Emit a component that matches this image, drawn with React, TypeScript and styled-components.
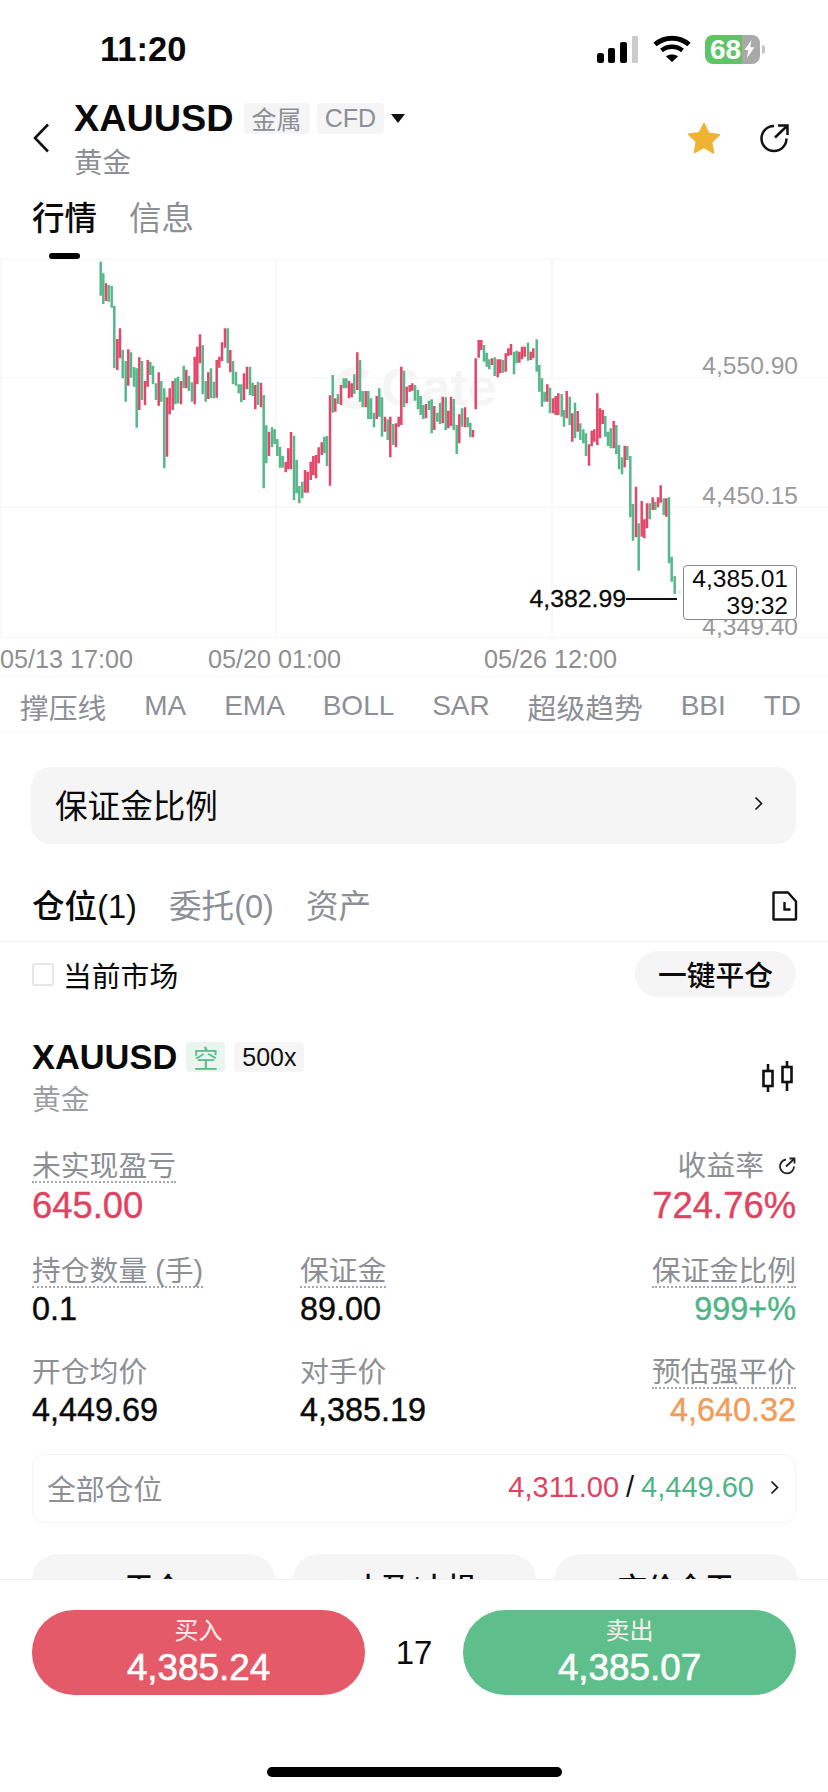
import React from 'react';
import styled, { createGlobalStyle } from 'styled-components';

const RED = '#e0435f';
const GREEN = '#4fb587';
const GRAY = '#8c9095';

const GlobalStyle = createGlobalStyle`
  html, body {
    margin: 0;
    padding: 0;
    background: #fff;
    font-family: "Liberation Sans", "Noto Sans CJK SC", sans-serif;
    color: #0a0a0a;
  }
  * { box-sizing: border-box; }
`;

const Page = styled.div`
  width: 828px;
  height: 1792px;
  display: flex;
  flex-direction: column;
  overflow: hidden;
  background: #fff;
`;

const Content = styled.div`
  flex: 1;
  min-height: 0;
  overflow: hidden;
`;

/* status bar */
const StatusBar = styled.div`
  height: 98px;
  padding: 0 63px 0 100px;
  display: flex;
  align-items: center;
  justify-content: space-between;
`;

const Clock = styled.div`
  font-size: 34.5px;
  font-weight: 700;
`;

const StatusIcons = styled.div`
  display: flex;
  align-items: center;
  gap: 14px;
`;

const Battery = styled.div`
  position: relative;
  width: 55px;
  height: 29px;
  border-radius: 8px;
  background: linear-gradient(90deg, #5fc465 0 68%, #a9a9a9 68% 100%);
  color: #fff;
  font-size: 28px;
  font-weight: 700;
  line-height: 29px;
  padding-left: 5px;
  display: flex;
  align-items: center;
  margin-right: 5px;
  svg {
    margin-left: 3px;
    flex: none;
  }
  &::after {
    content: '';
    position: absolute;
    right: -5px;
    top: 10px;
    width: 3px;
    height: 9px;
    border-radius: 0 3px 3px 0;
    background: #c4c4c4;
  }
`;

/* symbol header */
const Header = styled.div`
  height: 92px;
  padding: 0 38px 0 32px;
  display: flex;
  align-items: flex-start;
`;

const BackBox = styled.div`
  width: 42px;
  margin-top: 25px;
  display: flex;
`;

const TitleBlock = styled.div`
  flex: 1;
`;

const TitleRow = styled.div`
  height: 40px;
  display: flex;
  align-items: center;
`;

const Symbol = styled.div<{ $size: number }>`
  font-size: ${(p) => p.$size}px;
  font-weight: 700;
`;

const Tag = styled.span<{ $tone?: 'green' | 'dark' }>`
  height: ${(p) => (p.$tone ? 30 : 31)}px;
  padding: 0 ${(p) => (p.$tone === 'green' ? 7 : 8)}px;
  margin-left: 7px;
  border-radius: 4px;
  display: inline-flex;
  align-items: center;
  font-size: 25px;
  background: ${(p) => (p.$tone === 'green' ? '#e8f6ef' : '#f5f5f5')};
  color: ${(p) => (p.$tone === 'green' ? '#5bbd8b' : p.$tone === 'dark' ? '#111' : '#8c9095')};
`;

const Caret = styled.span`
  margin-left: 7px;
  width: 0;
  height: 0;
  border-left: 7px solid transparent;
  border-right: 7px solid transparent;
  border-top: 9px solid #111;
`;

const SubName = styled.div`
  height: 48px;
  margin-top: 1px;
  line-height: 48px;
  font-size: 28.5px;
  color: ${GRAY};
`;

const HeaderActions = styled.div`
  margin-top: 24px;
  display: flex;
  align-items: center;
  gap: 39px;
`;

/* tabs */
const ChartTabs = styled.div`
  height: 69px;
  padding-left: 32px;
  display: flex;
  gap: 32px;
`;

const ChartTab = styled.div<{ $active?: boolean }>`
  font-size: 32.5px;
  line-height: 58px;
  font-weight: ${(p) => (p.$active ? 500 : 400)};
  color: ${(p) => (p.$active ? '#0a0a0a' : GRAY)};
  &::after {
    content: '';
    display: block;
    width: 31px;
    height: 6px;
    margin: 5px auto 0;
    border-radius: 3px;
    background: ${(p) => (p.$active ? '#000' : 'transparent')};
  }
`;

/* chart */
const ChartWrap = styled.div`
  position: relative;
  height: 379px;
  svg {
    display: block;
  }
`;

const YLabel = styled.div<{ $top: number }>`
  position: absolute;
  right: 30px;
  top: ${(p) => p.$top}px;
  font-size: 24.6px;
  line-height: 28px;
  color: #999;
`;

const LastPrice = styled.div`
  position: absolute;
  top: 326px;
  right: 151px;
  display: flex;
  align-items: center;
  font-size: 24.8px;
  line-height: 28px;
  color: #0a0a0a;
  -webkit-text-stroke: 0.3px currentColor;
  &::after {
    content: '';
    width: 51px;
    height: 2px;
    background: #111;
  }
`;

const PriceBox = styled.div`
  position: absolute;
  top: 306px;
  right: 31px;
  width: 114px;
  height: 55px;
  padding: 0 8px 0 0;
  border: 1px solid #8a8a8a;
  border-radius: 4px;
  background: #fff;
  font-size: 24.6px;
  line-height: 26.5px;
  text-align: right;
  color: #0a0a0a;
`;

const TimeAxis = styled.div`
  height: 39px;
  padding-top: 7px;
  display: grid;
  grid-template-columns: 208px 276px 1fr;
  font-size: 25.2px;
  line-height: 28px;
  color: #8f8f8f;
  border-bottom: 1px solid #f7f7f7;
`;

const IndicatorRow = styled.div`
  height: 56px;
  padding: 3px 27px 0 20px;
  display: flex;
  align-items: center;
  justify-content: space-between;
  color: ${GRAY};
  border-bottom: 1px solid #f7f7f7;
`;

const Indicator = styled.span<{ $cjk?: boolean }>`
  font-size: ${(p) => (p.$cjk ? 28.8 : 28)}px;
`;

const MarginCard = styled.div`
  height: 77px;
  margin: 34px 32px 0 31px;
  padding: 0 33px 5px 24px;
  border-radius: 20px;
  background: #f5f5f5;
  display: flex;
  align-items: center;
  justify-content: space-between;
  font-size: 32.6px;
`;

/* positions */
const PositionTabs = styled.div`
  height: 98px;
  padding: 40px 30px 18px 32px;
  display: flex;
  align-items: center;
  gap: 32px;
  border-bottom: 1px solid #f3f3f3;
`;

const PositionTab = styled.div<{ $active?: boolean }>`
  font-size: 32.6px;
  font-weight: ${(p) => (p.$active ? 500 : 400)};
  color: ${(p) => (p.$active ? '#0a0a0a' : GRAY)};
  white-space: nowrap;
`;

const PushRight = styled.div`
  margin-left: auto;
  display: flex;
  padding-top: 4px;
`;

const FilterRow = styled.div`
  height: 55px;
  padding: 9px 32px 0;
  display: flex;
  align-items: center;
  justify-content: space-between;
`;

const MarketCheck = styled.label`
  display: flex;
  align-items: center;
  gap: 9px;
  font-size: 28.8px;
`;

const CheckBox = styled.span`
  width: 22px;
  height: 23px;
  border: 2px solid #e6e6e6;
  border-radius: 3px;
`;

const PillButton = styled.div`
  width: 161px;
  height: 46px;
  padding-bottom: 2px;
  border-radius: 23px;
  background: #f5f5f5;
  display: flex;
  align-items: center;
  justify-content: center;
  font-size: 28.8px;
  font-weight: 500;
`;

const PositionHead = styled.div`
  margin-top: 45px;
  padding: 0 35px 0 32px;
  display: flex;
  justify-content: space-between;
`;

const PositionTitle = styled.div`
  height: 30px;
  display: flex;
  align-items: center;
  gap: 2px;
`;

const PositionName = styled.div`
  height: 40px;
  margin-top: 8px;
  line-height: 40px;
  font-size: 28.8px;
  color: #9a9ea3;
`;

const IconSlot = styled.div`
  margin-top: 19px;
  display: flex;
`;

const StatGrid = styled.div`
  margin-top: 31px;
  padding: 0 32px;
  display: grid;
  grid-template-columns: 268px 1fr auto;
  row-gap: 27px;
`;

const Stat = styled.div<{ $right?: boolean }>`
  display: flex;
  flex-direction: column;
  align-items: ${(p) => (p.$right ? 'flex-end' : 'flex-start')};
`;

const StatLabel = styled.div<{ $dotted?: boolean }>`
  height: 32px;
  display: flex;
  align-items: center;
  font-size: 28.8px;
  line-height: 32px;
  color: ${GRAY};
  border-bottom: 2px dotted ${(p) => (p.$dotted ? '#a8a8a8' : 'transparent')};
  white-space: nowrap;
  svg {
    margin-left: 14px;
  }
`;

const StatValue = styled.div<{ $big?: boolean; $color?: string }>`
  font-size: ${(p) => (p.$big ? 36.4 : 32.4)}px;
  line-height: ${(p) => (p.$big ? 46 : 42)}px;
  color: ${(p) => p.$color || '#0a0a0a'};
  -webkit-text-stroke: 0.4px currentColor;
`;

const AllPositions = styled.div`
  height: 69px;
  margin: 23px 32px 0;
  padding: 0 16px 3px 14px;
  border: 1px solid #f4f4f4;
  border-radius: 12px;
  display: flex;
  align-items: center;
  justify-content: space-between;
  font-size: 28.8px;
  color: ${GRAY};
`;

const RangeValues = styled.div`
  display: flex;
  align-items: center;
  gap: 7px;
  font-size: 29px;
  color: #111;
  svg {
    margin-left: 9px;
  }
`;

const Tone = styled.span<{ $color: string }>`
  color: ${(p) => p.$color};
`;

const ActionRow = styled.div`
  margin: 31px 32px 0;
  display: grid;
  grid-template-columns: 243px 243px 244px;
  gap: 18px;
`;

const ActionButton = styled.div`
  height: 64px;
  padding-top: 11px;
  border-radius: 26px;
  background: #f5f5f5;
  text-align: center;
  font-size: 29px;
  font-weight: 500;
`;

/* trade footer */
const Footer = styled.div`
  height: 213px;
  padding: 30px 32px 0;
  background: #fff;
  border-top: 1px solid #f2f2f2;
`;

const TradeRow = styled.div`
  display: flex;
  align-items: center;
  justify-content: space-between;
`;

const TradeButton = styled.div<{ $bg: string }>`
  width: 333px;
  height: 85px;
  padding-top: 6px;
  border-radius: 42px;
  background: ${(p) => p.$bg};
  color: #fff;
  display: flex;
  flex-direction: column;
  align-items: center;
`;

const TradeLabel = styled.div`
  font-size: 24px;
  line-height: 30px;
  color: #fdeeee;
`;

const TradePrice = styled.div`
  margin-top: 2px;
  font-size: 36.8px;
  line-height: 40px;
  -webkit-text-stroke: 0.6px currentColor;
`;

const Spread = styled.div`
  font-size: 33px;
`;

const HomeBar = styled.div`
  width: 295px;
  height: 10px;
  margin: 72px auto 0;
  border-radius: 5px;
  background: #000;
`;

type Row = [number, number, number, 0 | 1];

// transcribed from the chart: [x, top, bottom, up]
const seg1: Row[] = [
  [17,20,122,0],[25,55,147,0],[33,85,138,1],[41,90,140,0],[50,93,158,0],[58,152,340,0],[67,252,345,1],[75,220,310,1],
  [83,285,370,0],[92,318,440,0],[100,283,392,1],[108,292,368,0],[117,336,395,0],[125,340,518,0],[133,307,465,1],
  [141,318,435,0],[150,378,450,1],[158,315,395,1],[166,320,360,0],[174,332,388,0],[183,385,435,0],[191,352,452,1],
  [199,378,440,0],[208,400,640,0],[216,427,605,1],[224,400,478,1],[233,378,465,1],[241,370,448,0],[249,365,445,0],
  [258,378,448,1],[266,332,400,0],[274,344,400,1],[282,362,408,0],[291,382,440,0],[299,305,448,1],[307,275,388,1],
  [315,238,325,1],[323,270,418,0],[332,378,440,0],[340,352,432,1],[348,340,430,0],[357,380,430,0],[365,315,428,1],
  [373,305,338,1],[381,262,318,1],[390,220,278,1],[398,220,325,0],[406,285,352,1],[414,318,388,0],[423,350,392,0],
  [431,388,415,0],[439,388,442,0],[447,355,435,1],[456,335,402,1],
];

const seg2: Row[] = [
  [0,140,225,0],[8,188,228,0],[16,195,268,1],[24,185,255,0],[33,188,262,1],[41,225,505,0],[49,316,430,0],[57,335,408,1],
  [66,322,382,0],[74,328,372,0],[82,357,408,0],[90,380,443,0],[98,408,443,0],[107,425,457,1],[115,385,448,1],[123,336,448,1],
  [132,347,540,0],[140,420,520,0],[148,498,550,0],[157,485,535,0],[165,450,518,1],[173,455,518,1],[182,425,480,1],
  [190,408,465,1],[198,405,475,1],[206,382,430,1],[215,367,405,1],[223,350,400,0],[231,348,438,0],[240,226,497,1],
  [248,165,278,0],[256,235,275,1],[264,222,252,0],[273,195,255,1],[281,175,205,0],[289,175,205,0],[297,182,235,1],
  [305,190,232,1],[313,163,222,0],[322,97,210,1],[330,120,245,0],[338,213,262,0],[347,213,262,1],[355,213,297,0],
  [363,235,297,0],[372,278,322,0],[380,228,297,1],[388,205,290,0],[396,232,350,0],[405,290,335,1],[413,298,360,0],
  [421,290,412,1],[430,312,375,0],[438,310,382,1],[446,290,320,1],
];

const seg3: Row[] = [
  [4,140,315,1],[12,152,262,0],[20,200,250,1],[29,195,215,1],[37,190,212,1],[45,195,242,0],[54,210,268,0],[62,228,285,0],
  [70,255,297,0],[78,252,295,1],[87,242,270,0],[95,238,340,0],[103,258,330,1],[112,278,305,0],[120,248,312,0],[128,230,310,1],
  [137,232,330,0],[145,272,325,1],[153,230,318,1],[161,237,330,0],[170,315,402,0],[178,283,370,1],[186,265,320,0],[195,262,322,1],
  [203,292,322,0],[211,308,352,0],[219,330,352,1],[227,115,268,1],[236,60,113,1],[244,60,90,1],[252,75,125,0],[260,98,140,0],
  [268,118,148,0],[276,115,135,1],[284,112,168,0],[293,118,172,1],[301,118,160,1],[309,120,158,0],[317,100,155,1],[325,85,108,1],
  [333,72,105,1],[342,95,163,0],[350,92,130,0],[358,95,128,1],[366,80,118,1],[374,80,110,1],[384,68,122,0],[392,95,120,1],
  [400,85,115,1],[410,58,155,0],[418,135,215,0],[426,175,260,0],[434,215,245,0],[442,193,245,1],[450,203,280,0],[459,235,280,1],
  [467,228,285,1],[475,220,285,1],
];

const seg4: Row[] = [
  [65,42,110,0],[72,90,140,0],[80,33,115,1],[89,50,135,0],[97,100,185,1],[105,68,175,0],[113,93,155,1],[121,130,180,0],
  [130,148,190,0],[138,160,228,0],[147,193,257,1],[155,152,198,1],[163,148,185,1],[172,40,195,1],[180,85,175,1],[188,90,132,1],
  [196,108,170,0],[204,155,198,0],[212,145,205,0],[221,123,205,1],[229,135,222,0],[237,195,268,0],[246,232,283,0],[254,197,262,1],
  [262,198,240,0],[271,228,412,0],[279,372,482,0],[288,320,472,1],[296,430,572,0],[305,363,470,1],[313,418,475,1],[321,370,445,1],
  [329,370,418,0],[338,352,390,1],[346,365,390,0],[354,352,382,1],[362,316,368,1],[371,355,405,0],[379,355,410,1],[387,352,550,0],
  [395,530,605,0],[404,588,642,0],
];

const place = (rows: Row[], ox: number, oy: number): Row[] =>
  rows.map(([x, t, b, u]) => [ox + x / 3, oy + t / 3, oy + b / 3, u]);

const bars = [
  ...place(seg1, 95, 255),
  ...place(seg2, 250, 320),
  ...place(seg3, 400, 320),
  ...place(seg4, 540, 380),
];

const barPath = (up: 0 | 1) =>
  bars
    .filter((b) => b[3] === up)
    .map(([x, t, b]) => `M${x.toFixed(1)} ${t.toFixed(1)}V${b.toFixed(1)}`)
    .join('');

const CandleChart = () => (
  <svg width="828" height="379" viewBox="0 259 828 379">
    <path d="M0 259.5H828M0 378H828M0 507H828M0 637.5H828M1 259V638M276 259V638M552 259V638" stroke="#f6f6f6" strokeWidth="1.2" fill="none" />
    <path d="M367 376a17 17 0 1 0 0 24" stroke="#f5f5f5" strokeWidth="8" fill="none" />
    <text x="381" y="405" fontSize="52" fontWeight="700" fill="#f5f5f5" fontFamily="Liberation Sans, sans-serif">Gate</text>
    <path d={barPath(0)} stroke="#55b88a" strokeWidth="2.5" fill="none" />
    <path d={barPath(1)} stroke="#e4466a" strokeWidth="2.5" fill="none" />
    <path d="M677 592h4" stroke="#cfcfcf" strokeWidth="1" />
  </svg>
);

const Chevron = ({ size = 14, color = '#111' }: { size?: number; color?: string }) => (
  <svg width={size * 0.6} height={size} viewBox="0 0 6 10" fill="none">
    <path d="M1 1l4 4-4 4" stroke={color} strokeWidth="1.1" />
  </svg>
);

const indicators = [
  { name: '撑压线', cjk: true },
  { name: 'MA' },
  { name: 'EMA' },
  { name: 'BOLL' },
  { name: 'SAR' },
  { name: '超级趋势', cjk: true },
  { name: 'BBI' },
  { name: 'TD' },
];

export default function App() {
  return (
    <Page>
      <GlobalStyle />
      <Content>
        <StatusBar>
          <Clock>11:20</Clock>
          <StatusIcons>
            <svg width="42" height="27" viewBox="0 0 42 27">
              <rect x="0" y="17" width="7" height="10" rx="2.5" fill="#000" />
              <rect x="11" y="12" width="7" height="15" rx="2" fill="#000" />
              <rect x="23" y="6" width="7" height="21" rx="2" fill="#000" />
              <rect x="35" y="0" width="6" height="27" rx="1" fill="#cbcbcb" />
            </svg>
            <svg width="38" height="28" viewBox="0 0 38 28" fill="none">
              <path d="M2 9.5C11.5 1 26.5 1 36 9.5" stroke="#000" strokeWidth="5" />
              <path d="M8.5 15.5C14.5 10.5 23.5 10.5 29.5 15.5" stroke="#000" strokeWidth="4.5" />
              <path d="M19 27l-6-5.5c3.5-2.6 8.5-2.6 12 0z" fill="#000" />
            </svg>
            <Battery>
              68
              <svg width="11" height="18" viewBox="0 0 11 18">
                <path d="M7.5 0L0.5 10h3.8L3 18 10.5 7.3H6.3z" fill="#fff" />
              </svg>
            </Battery>
          </StatusIcons>
        </StatusBar>

        <Header>
          <BackBox>
            <svg width="18" height="30" viewBox="0 0 18 30" fill="none">
              <path d="M16 1.5L3 15l13 13.5" stroke="#111" strokeWidth="2.6" />
            </svg>
          </BackBox>
          <TitleBlock>
            <TitleRow>
              <Symbol $size={37.8}>XAUUSD</Symbol>
              <Tag style={{ marginLeft: 10 }}>金属</Tag>
              <Tag>CFD</Tag>
              <Caret />
            </TitleRow>
            <SubName>黄金</SubName>
          </TitleBlock>
          <HeaderActions>
            <svg width="34" height="32" viewBox="0 0 34 32">
              <path
                d="M17 1.5l4.8 9.8 10.7 1.5-7.8 7.5 1.9 10.7L17 25.4 7.4 30.5l1.9-10.7-7.8-7.5 10.7-1.5z"
                fill="#f0b235"
                stroke="#f0b235"
                strokeWidth="1.5"
                strokeLinejoin="round"
              />
            </svg>
            <svg width="30" height="30" viewBox="0 0 30 30" fill="none" stroke="#111" strokeWidth="2.5">
              <path d="M14 3a12.5 12.5 0 1 0 12.5 12.5" />
              <path d="M15 14.5L27.5 2.5M18 2.5h9.5V12" />
            </svg>
          </HeaderActions>
        </Header>

        <ChartTabs>
          <ChartTab $active>行情</ChartTab>
          <ChartTab>信息</ChartTab>
        </ChartTabs>

        <ChartWrap>
          <CandleChart />
          <YLabel $top={93}>4,550.90</YLabel>
          <YLabel $top={223}>4,450.15</YLabel>
          <YLabel $top={354}>4,349.40</YLabel>
          <LastPrice>4,382.99</LastPrice>
          <PriceBox>
            4,385.01
            <br />
            39:32
          </PriceBox>
        </ChartWrap>

        <TimeAxis>
          <span>05/13 17:00</span>
          <span>05/20 01:00</span>
          <span>05/26 12:00</span>
        </TimeAxis>

        <IndicatorRow>
          {indicators.map((item) => (
            <Indicator key={item.name} $cjk={item.cjk}>{item.name}</Indicator>
          ))}
        </IndicatorRow>

        <MarginCard>
          保证金比例
          <Chevron size={15} />
        </MarginCard>

        <PositionTabs>
          <PositionTab $active>仓位(1)</PositionTab>
          <PositionTab>委托(0)</PositionTab>
          <PositionTab>资产</PositionTab>
          <PushRight>
            <svg width="26" height="30" viewBox="0 0 26 30" fill="none" stroke="#111" strokeWidth="2.4">
              <path d="M2 1.5h14l8 9v17.5a.5.5 0 0 1-.5.5H2a.5.5 0 0 1-.5-.5V2a.5.5 0 0 1 .5-.5z" strokeLinejoin="round" />
              <path d="M12.5 11v7.5h6" />
            </svg>
          </PushRight>
        </PositionTabs>

        <FilterRow>
          <MarketCheck>
            <CheckBox />
            当前市场
          </MarketCheck>
          <PillButton>一键平仓</PillButton>
        </FilterRow>

        <PositionHead>
          <div>
            <PositionTitle>
              <Symbol $size={34.4}>XAUUSD</Symbol>
              <Tag $tone="green">空</Tag>
              <Tag $tone="dark">500x</Tag>
            </PositionTitle>
            <PositionName>黄金</PositionName>
          </div>
          <IconSlot>
            <svg width="31" height="31" viewBox="0 0 31 31" fill="none" stroke="#111" strokeWidth="2.6">
              <rect x="1.5" y="10" width="9" height="15" />
              <path d="M6 3v7M6 25v6" />
              <rect x="20.5" y="6" width="9" height="15" />
              <path d="M25 0v6M25 21v9" />
            </svg>
          </IconSlot>
        </PositionHead>

        <StatGrid>
          <Stat>
            <StatLabel $dotted>未实现盈亏</StatLabel>
            <StatValue $big $color={RED}>645.00</StatValue>
          </Stat>
          <div />
          <Stat $right>
            <StatLabel>
              收益率
              <svg width="18" height="18" viewBox="0 0 18 18" fill="none" stroke="#222" strokeWidth="1.8">
                <path d="M8 2.5a7 7 0 1 0 8 7" />
                <path d="M8 9.5L16 2M11.5 1.5H16.5V6.5" />
              </svg>
            </StatLabel>
            <StatValue $big $color={RED}>724.76%</StatValue>
          </Stat>
          <Stat>
            <StatLabel $dotted>持仓数量 (手)</StatLabel>
            <StatValue>0.1</StatValue>
          </Stat>
          <Stat>
            <StatLabel $dotted>保证金</StatLabel>
            <StatValue>89.00</StatValue>
          </Stat>
          <Stat $right>
            <StatLabel $dotted>保证金比例</StatLabel>
            <StatValue $color={GREEN}>999+%</StatValue>
          </Stat>
          <Stat>
            <StatLabel>开仓均价</StatLabel>
            <StatValue>4,449.69</StatValue>
          </Stat>
          <Stat>
            <StatLabel>对手价</StatLabel>
            <StatValue>4,385.19</StatValue>
          </Stat>
          <Stat $right>
            <StatLabel $dotted>预估强平价</StatLabel>
            <StatValue $color="#ef9d58">4,640.32</StatValue>
          </Stat>
        </StatGrid>

        <AllPositions>
          全部仓位
          <RangeValues>
            <Tone $color={RED}>4,311.00</Tone>
            <Tone $color="#111">/</Tone>
            <Tone $color={GREEN}>4,449.60</Tone>
            <Chevron size={15} />
          </RangeValues>
        </AllPositions>

        <ActionRow>
          <ActionButton>平仓</ActionButton>
          <ActionButton>止盈/止损</ActionButton>
          <ActionButton>市价全平</ActionButton>
        </ActionRow>
      </Content>

      <Footer>
        <TradeRow>
          <TradeButton $bg="#e55a69">
            <TradeLabel>买入</TradeLabel>
            <TradePrice>4,385.24</TradePrice>
          </TradeButton>
          <Spread>17</Spread>
          <TradeButton $bg="#5fbf8c">
            <TradeLabel>卖出</TradeLabel>
            <TradePrice>4,385.07</TradePrice>
          </TradeButton>
        </TradeRow>
        <HomeBar />
      </Footer>
    </Page>
  );
}
